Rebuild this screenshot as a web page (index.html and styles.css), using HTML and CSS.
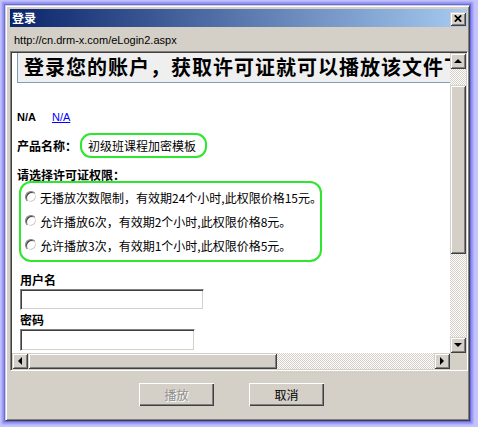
FILE: index.html
```html
<!DOCTYPE html>
<html lang="zh-CN">
<head>
<meta charset="utf-8">
<title>登录</title>
<link rel="stylesheet" href="styles.css">
</head>
<body>
<div class="window">
  <div class="titlebar">
    <span class="title">登录</span>
    <span class="close raised"><svg width="8" height="7" viewBox="0 0 8 7"><path d="M0.8 0.3l6.4 6.4M7.2 0.3l-6.4 6.4" stroke="#000" stroke-width="1.7"/></svg></span>
  </div>
  <div class="address">http://cn.drm-x.com/eLogin2.aspx</div>
  <div class="frame">
    <div class="viewport">
      <div class="heading">登录您的账户，获取许可证就可以播放该文件下载</div>
      <div class="na-row"><b>N/A</b><a href="#">N/A</a></div>
      <div class="product-row"><span class="label">产品名称：</span><span class="product">初级班课程加密模板</span></div>
      <div class="label perm-label">请选择许可证权限：</div>
      <div class="options">
        <div class="option"><span class="radio"></span>无播放次数限制，有效期24个小时,此权限价格15元。</div>
        <div class="option"><span class="radio"></span>允许播放6次，有效期2个小时,此权限价格8元。</div>
        <div class="option"><span class="radio"></span>允许播放3次，有效期1个小时,此权限价格5元。</div>
      </div>
      <div class="label field-label">用户名</div>
      <div class="input user"></div>
      <div class="label field-label pass-label">密码</div>
      <div class="input pass"></div>
    </div>
    <div class="vscroll checker">
      <div class="sbtn raised"><i class="arr-up"></i></div>
      <div class="vthumb raised"></div>
      <div class="sbtn raised push-end"><i class="arr-down"></i></div>
    </div>
    <div class="hscroll checker">
      <div class="sbtn raised"><i class="arr-left"></i></div>
      <div class="hthumb raised"></div>
      <div class="sbtn raised push-end-h"><i class="arr-right"></i></div>
    </div>
    <div class="corner"></div>
  </div>
  <div class="buttons">
    <button class="btn disabled">播放</button>
    <button class="btn">取消</button>
  </div>
</div>
</body>
</html>
```

FILE: styles.css
```css
html, body {
  margin: 0;
  padding: 0;
}
body {
  width: 478px;
  height: 427px;
  overflow: hidden;
  background: #c4c4fa;
  font-family: "Liberation Sans", "Noto Sans CJK SC", sans-serif;
  font-size: 11px;
  color: #000;
}
.window {
  box-sizing: border-box;
  margin: 5px 0 0 5px;
  width: 465px;
  height: 416px;
  background: #d4d0c8;
  border: 1px solid;
  border-color: #d4d0c8 #404040 #404040 #d4d0c8;
  box-shadow: inset 1px 1px #fff, inset -1px -1px #808080, 0 0 0 1px #6a6ae8, 0 0 2px 3px #8c8cf4;
  padding: 3px 1px 3px 4px;
  display: flex;
  flex-direction: column;
}
.titlebar {
  height: 18px;
  margin-right: 1px;
  background: linear-gradient(to right, #0a246a, #a6caf0);
  display: flex;
  align-items: center;
  justify-content: space-between;
}
.title {
  color: #fff;
  font-family: "Noto Sans CJK SC", sans-serif;
  font-weight: bold;
  font-size: 12px;
  line-height: 18px;
  padding-left: 2px;
}
.close {
  width: 16px;
  height: 14px;
  margin-right: 1px;
  margin-top: 1px;
  display: flex;
  align-items: center;
  justify-content: center;
}
.raised {
  background: #d4d0c8;
  box-shadow: inset 1px 1px #d4d0c8, inset -1px -1px #404040, inset 2px 2px #fff, inset -2px -2px #808080;
}
.address {
  box-sizing: border-box;
  height: 24px;
  padding: 2px 0 0 4px;
  line-height: 22px;
  font-size: 11px;
  color: #000;
}
.frame {
  box-sizing: border-box;
  height: 320px;
  width: 458px;
  border: 1px solid;
  border-color: #808080 #fff #fff #808080;
  box-shadow: inset 1px 1px #404040, inset -1px -1px #d4d0c8;
  padding: 1px;
  background: #fff;
  display: grid;
  grid-template-columns: 1fr 16px;
  grid-template-rows: 1fr 16px;
}
.viewport {
  overflow: hidden;
  background: #fff;
  min-width: 0;
  min-height: 0;
}
.heading {
  box-sizing: border-box;
  margin-left: 5px;
  width: 600px;
  height: 30px;
  border: 1px solid #7f9db9;
  border-top: none;
  background: #efefef;
  white-space: nowrap;
  font-family: "Noto Sans CJK SC", sans-serif;
  font-weight: bold;
  font-size: 20px;
  letter-spacing: 1px;
  line-height: 27px;
  padding-left: 6px;
}
.na-row {
  margin: 26px 0 0 5px;
  line-height: 16px;
  font-size: 11px;
  display: flex;
}
.na-row a {
  margin-left: 16px;
  color: #0000ff;
  text-decoration: underline;
}
.label {
  font-family: "Noto Sans CJK SC", sans-serif;
  font-weight: bold;
  font-size: 12px;
}
.product-row {
  margin: 8px 0 0 5px;
  display: flex;
  align-items: center;
}
.product {
  box-sizing: border-box;
  margin-left: 3px;
  height: 25px;
  border: 2px solid #2ee62e;
  border-radius: 11px;
  padding: 0 9px 0 6px;
  font-family: "Noto Sans CJK SC", sans-serif;
  font-size: 12px;
  line-height: 21px;
}
.perm-label {
  margin: 11px 0 0 5px;
  line-height: 12px;
}
.options {
  box-sizing: border-box;
  margin: 0 0 0 7px;
  width: 303px;
  height: 81px;
  border: 2px solid #2ee62e;
  border-radius: 12px;
  padding: 2px 0 3px 4px;
}
.option {
  height: 24px;
  display: flex;
  align-items: center;
  font-family: "Noto Sans CJK SC", sans-serif;
  font-size: 12px;
  white-space: nowrap;
}
.radio {
  box-sizing: border-box;
  width: 12px;
  height: 12px;
  margin-right: 3px;
  border-radius: 50%;
  border: 1px solid;
  border-color: #808080 #fff #fff #808080;
  box-shadow: inset 1px 1px #404040, inset -1px -1px #d4d0c8;
  background: #fff;
  flex: none;
}
.field-label {
  margin: 10px 0 0 8px;
  line-height: 16px;
}
.pass-label {
  margin-top: 2px;
}
.input {
  box-sizing: border-box;
  margin: 1px 0 0 8px;
  height: 21px;
  border: 1px solid;
  border-color: #808080 #fff #fff #808080;
  box-shadow: inset 1px 1px #404040, inset -1px -1px #d4d0c8;
  background: #fff;
}
.user { width: 184px; }
.pass { width: 175px; height: 22px; }
.checker {
  background: repeating-conic-gradient(#d4d0c8 0 25%, #fff 0 50%) 0 0 / 2px 2px;
}
.vscroll {
  display: flex;
  flex-direction: column;
}
.hscroll {
  display: flex;
}
.sbtn {
  width: 16px;
  height: 16px;
  flex: none;
  display: flex;
  align-items: center;
  justify-content: center;
}
.push-end { margin-top: auto; }
.push-end-h { margin-left: auto; }
.vthumb {
  margin-top: 16px;
  height: 169px;
  flex: none;
}
.hthumb {
  width: 249px;
  flex: none;
}
.corner { background: #d4d0c8; }
.sbtn i { display: block; width: 0; height: 0; }
.arr-up {
  border-left: 4px solid transparent;
  border-right: 4px solid transparent;
  border-bottom: 4px solid #000;
  margin-top: -1px;
}
.arr-down {
  border-left: 4px solid transparent;
  border-right: 4px solid transparent;
  border-top: 4px solid #000;
}
.arr-left {
  border-top: 4px solid transparent;
  border-bottom: 4px solid transparent;
  border-right: 4px solid #000;
  margin-left: -1px;
}
.arr-right {
  border-top: 4px solid transparent;
  border-bottom: 4px solid transparent;
  border-left: 4px solid #000;
}
.buttons {
  box-sizing: border-box;
  height: 46px;
  padding: 12px 0 0 129px;
  display: flex;
  align-items: flex-start;
  gap: 35px;
}
.btn {
  width: 75px;
  height: 23px;
  padding: 0;
  border: none;
  background: #d4d0c8;
  box-shadow: inset 1px 1px #fff, inset -1px -1px #404040, inset -2px -2px #808080;
  font-family: "Noto Sans CJK SC", sans-serif;
  font-size: 12px;
  color: #000;
}
.btn.disabled {
  color: #8d8d8d;
  text-shadow: 1px 1px #fff;
}
```
